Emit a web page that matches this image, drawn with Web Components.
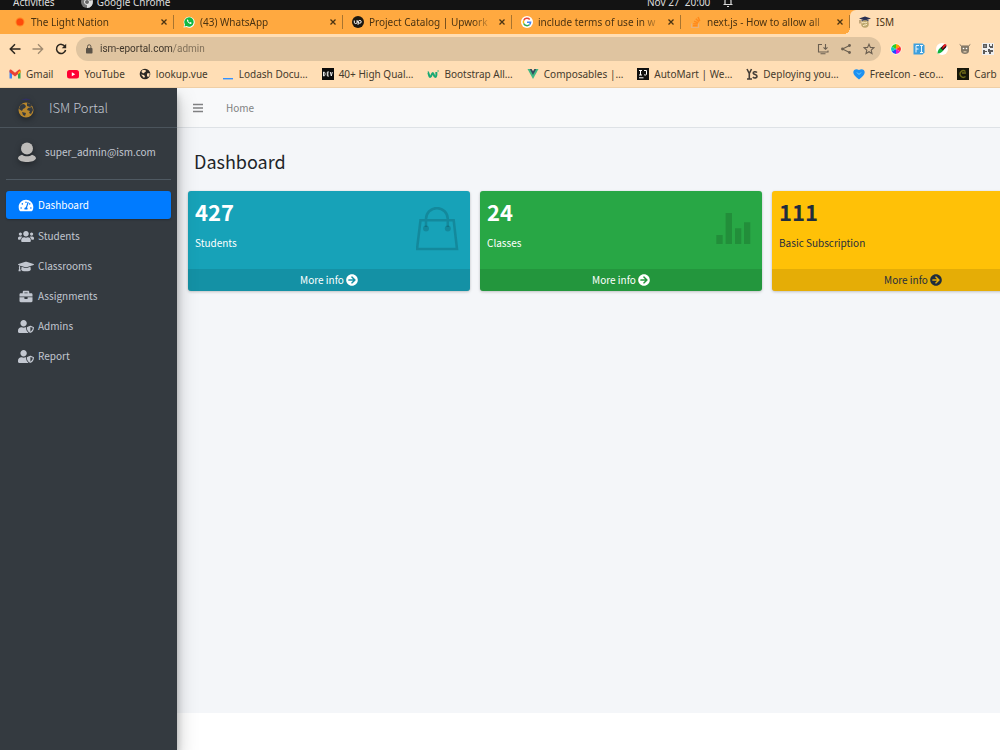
<!DOCTYPE html>
<html lang="en">
<head>
<meta charset="utf-8">
<title>ISM</title>
<style>
    body {
        margin: 0;
        min-height: 100vh;
        display: flex;
        flex-direction: column;
        overflow: hidden;
        font: 10px/16px "Noto Sans", sans-serif;
        color: #453a2c;
    }
</style>
</head>
<body>

<system-bar time="Nov 27&nbsp; 20:00">Google Chrome</system-bar>

<tab-strip>
    <browser-tab icon="lightNation">The Light Nation</browser-tab>
    <browser-tab icon="whatsapp">(43) WhatsApp</browser-tab>
    <browser-tab icon="upwork">Project Catalog | Upwork</browser-tab>
    <browser-tab icon="google">include terms of use in w</browser-tab>
    <browser-tab icon="stack">next.js - How to allow all</browser-tab>
    <browser-tab icon="ism" active>ISM</browser-tab>
</tab-strip>

<address-bar url="ism-eportal.com/admin"></address-bar>

<bookmarks-bar>
    <bookmark-link icon="gmail">Gmail</bookmark-link>
    <bookmark-link icon="youtube">YouTube</bookmark-link>
    <bookmark-link icon="globe">lookup.vue</bookmark-link>
    <bookmark-link icon="lodash">Lodash Docu…</bookmark-link>
    <bookmark-link icon="dev">40+ High Qual…</bookmark-link>
    <bookmark-link icon="wrap">Bootstrap All…</bookmark-link>
    <bookmark-link icon="vue">Composables |…</bookmark-link>
    <bookmark-link icon="intellij">AutoMart | We…</bookmark-link>
    <bookmark-link icon="ys">Deploying you…</bookmark-link>
    <bookmark-link icon="freeicon">FreeIcon - eco…</bookmark-link>
    <bookmark-link icon="carbon">Carb</bookmark-link>
</bookmarks-bar>

<admin-shell>
    <side-bar slot="sidebar" brand="ISM Portal" user="super_admin@ism.com">
        <side-link icon="gauge" active>Dashboard</side-link>
        <side-link icon="users">Students</side-link>
        <side-link icon="cap">Classrooms</side-link>
        <side-link icon="briefcase">Assignments</side-link>
        <side-link icon="shield">Admins</side-link>
        <side-link icon="shield">Report</side-link>
    </side-bar>
    <top-nav slot="nav">Home</top-nav>
    <span slot="title">Dashboard</span>
    <info-card theme="info" value="427" icon="bag">Students</info-card>
    <info-card theme="success" value="24" icon="stats">Classes</info-card>
    <info-card theme="warning" value="111" icon="person">Basic Subscription</info-card>
</admin-shell>

<script>
// [viewBox, markup]; everything without its own colour takes currentColor
const icons = {
    chrome: ['0 0 12 12', '<circle cx="6" cy="6" r="6" fill="#777"/><path d="M6 6 1 2.700A6 6 0 0 1 11.500 4H6z" fill="#bbb"/><path d="M6 6 6 12A6 6 0 0 0 11.500 4z" fill="#ddd"/><circle cx="6" cy="6" r="2.500" fill="#666" stroke="#eee"/>'],
    bell: ['0 0 12 12', '<path d="M1.500 8.500h9M3 8.500V5a3 3 0 0 1 6 0V8.500M5 10.500h2" fill="none" stroke="currentColor" stroke-width="1.200"/>'],
    close: ['0 0 8 8', '<path d="m1.500 1.500 5 5m0-5-5 5" stroke="currentColor" stroke-width="1.300"/>'],
    lightNation: ['0 0 12 12', '<circle cx="6" cy="6" r="4.500" fill="#ff7a1a" opacity=".7"/><circle cx="6" cy="6" r="3.500" fill="#ff4a0a"/>'],
    whatsapp: ['0 0 12 12', '<path d="M.5 11.500 1.300 8.700A5.500 5.500 0 1 1 3.500 11z" fill="#fff"/><path d="M1.400 10.600 2 8.500a4.700 4.700 0 1 1 1.700 1.600z" fill="#12b842"/><path d="M4.300 3.300c-1.400 1.100 2 5.500 4 4.400l.4-.9-1.400-.7-.6.600C6 6.400 5.500 5.900 5.200 5.300l.4-.6z" fill="#fff"/>'],
    upwork: ['0 0 12 12', '<circle cx="6" cy="6" r="6" fill="#1b1710"/><path d="M2.300 4.500v1.700a1.400 1.400 0 0 0 2.800 0V4.500c.6 1.600 1.200 2.700 2.700 2.700a1.400 1.400 0 1 0-1.400-1.500L6 8.800" fill="none" stroke="#fff"/>'],
    google: ['0 0 12 12', '<circle cx="6" cy="6" r="6" fill="#fff"/><g fill="none" stroke-width="1.500"><path d="M8.700 3.500A3.600 3.600 0 0 0 2.700 4.500" stroke="#ea4335"/><path d="M2.700 4.500a3.600 3.600 0 0 0 0 3" stroke="#fbbc05"/><path d="M2.700 7.500a3.600 3.600 0 0 0 5.700 1.200" stroke="#34a853"/><path d="M8.400 8.700A3.600 3.600 0 0 0 9.600 6.200H6" stroke="#4285f4"/></g>'],
    stack: ['0 0 12 12', '<path d="M1.500 7.500v4h7v-4" fill="none" stroke="#e9b179" stroke-width="1.200"/><path d="M3 9.800h4.500M3.200 7.700l4.500.4M4 5.300l4.200 1.600M5.800 2.800l3.200 3M8 1l1.800 4" stroke="#ff8a1c" stroke-width="1.500"/>'],
    ism: ['0 0 12 12', '<path d="m0 2.500 6-2 6 2-6 2z" fill="#2a3052"/><path d="M2.500 3.800h7v1.700h-7z" fill="#49506d"/><circle cx="6" cy="8" r="3.800" fill="#bda66d"/><path d="M3 7c2-2 3 1 5-1M4 10c1-2 3 0 4-2" stroke="#fff0c8" fill="none"/><path d="M1 4v3.500" stroke="#877040"/>'],
    back: ['0 0 12 12', '<path d="M11.500 6H1.500M6 1.300 1.300 6 6 10.700" fill="none" stroke="currentColor" stroke-width="1.500"/>'],
    forward: ['0 0 12 12', '<path d="M.5 6h10M6 1.300 10.700 6 6 10.700" fill="none" stroke="currentColor" stroke-width="1.300"/>'],
    reload: ['0 0 12 12', '<path d="M10 3.500A4.600 4.600 0 1 0 10.600 7" fill="none" stroke="currentColor" stroke-width="1.500"/><path d="M11.200.8v4.400H6.800z" fill="currentColor"/>'],
    lock: ['0 0 12 12', '<rect x="3" y="5" width="6.500" height="5.500" rx=".7" fill="currentColor"/><path d="M4.500 5V3.500a1.700 1.700 0 0 1 3.400 0V5" fill="none" stroke="currentColor"/>'],
    install: ['0 0 12 12', '<path d="M5 1.500H1.500V9H11V7.500M3.500 10.800h5M8.500 1v5M6.500 4.300l2 2 2-2" fill="none" stroke="currentColor" stroke-width="1.100"/>'],
    share: ['0 0 12 12', '<path d="M9.500 2.500 2.500 6l7 3.500" fill="none" stroke="currentColor" stroke-width="1.100"/><g fill="currentColor"><circle cx="9.500" cy="2.500" r="1.400"/><circle cx="2.500" cy="6" r="1.400"/><circle cx="9.500" cy="9.500" r="1.400"/></g>'],
    star: ['0 0 12 12', '<path d="m6 1.200 1.400 3.200 3.500.3-2.700 2.400.8 3.400-3-1.800-3 1.800.8-3.400L1.100 4.700l3.500-.3z" fill="none" stroke="currentColor" stroke-width="1.100"/>'],
    wheel: ['0 0 12 12', '<circle cx="6" cy="6" r="5.500" fill="#fff"/><path d="M6 6V1a5 5 0 0 1 4.300 2.500z" fill="#ff9d00"/><path d="m6 6 4.300-2.500a5 5 0 0 1 0 5z" fill="#ff2b2b"/><path d="m6 6 4.300 2.500A5 5 0 0 1 6 11z" fill="#e51bd0"/><path d="M6 6v5a5 5 0 0 1-4.300-2.500z" fill="#2447ff"/><path d="M6 6 1.700 8.500a5 5 0 0 1 0-5z" fill="#10c9c3"/><path d="M6 6 1.700 3.500A5 5 0 0 1 6 1z" fill="#35cc20"/>'],
    fi: ['0 0 12 12', '<path d="M.5.5h9l2 2v7l-2 2h-9z" fill="#3d9fdd"/><path d="M3 9.500v-7h3M3 6h2.500M7 2.500h3M8.500 2.500v7M7 9.500h3" stroke="#fff" fill="none" stroke-width=".9"/>'],
    picker: ['0 0 12 12', '<circle cx="6" cy="6" r="6" fill="#fff"/><path d="M1.500 10.500c0-3.500 2-5 3.500-6l2.500 2.500c-1 1.500-2.500 3.500-6 3.500z" fill="#12b33c"/><path d="m4.500 5 3-3c1.500-1 4 0 2.500 2.500L7 7.500z" fill="#151515"/><path d="m7 2.500 2-1.500 1.800 1L6 6.500z" fill="#e81c20"/>'],
    robot: ['0 0 12 12', '<path d="M.7 1.500 2.500 3h7l1.800-1.500" fill="none" stroke="#756a5b"/><path d="M2 3h8v5c0 4-8 4-8 0z" fill="#857a69"/><circle cx="4.500" cy="5.500" r=".8" fill="#fff"/><circle cx="7.500" cy="5.500" r=".8" fill="#fff"/><path d="M4.500 8h3v1.500h-3z" fill="#d0bfa5"/>'],
    qr: ['0 0 12 12', '<path d="M0 0h12v12H0z" fill="#eee"/><path d="M1 1h4v4H1zM7 1h1v2h2V1h1v4H8V4H7zM1 7h2v1h2v1H3v2H1zM6 6h2v1h3v2H9v2H7V9H6z" fill="#5b5b5b"/><path d="M2.500 2.500h1v1h-1z" fill="#fff"/>'],
    gmail: ['0 0 12 12', '<path d="M.5 10.500v-8L3 4.500v6z" fill="#4285f4"/><path d="M9 10.500v-6l2.500-2v8z" fill="#34a853"/><path d="M.5 4.300V2.500c0-1 1-1.300 1.800-.7L6 4.700l3.700-2.900c.8-.6 1.800-.3 1.800.7v1.800L6 8.500z" fill="#ea4335"/><path d="m9 4.500 2.500-2v2L9 6.300z" fill="#fbbc04"/>'],
    youtube: ['0 0 12 12', '<rect y="2" width="12" height="8.500" rx="2.500" fill="#ff0033"/><path d="m4.800 4.300 3.400 2-3.400 2z" fill="#fff"/>'],
    globe: ['0 0 12 12', '<circle cx="6" cy="6" r="5.300" fill="#2d2924"/><path d="M3 2.500c1-.8 4-.5 4 .5S5.500 4 5 5 3 4.500 2.500 4zM2 6.500l3 .5 1 1.500L5 10zM8 5.500l2.500-.5v3L9 9l-1-1z" fill="#ffdeb5"/>'],
    lodash: ['0 0 12 12', '<path d="M1 10h10v1.400H1z" fill="#3492ff"/>'],
    dev: ['0 0 12 12', '<path d="M0 0h12v12H0z" fill="#0b0b0b"/><path d="M1.500 4v4h.6c1.300 0 1.300-4 0-4zM7 4H5.300v4H7M5.300 6h1.400M8.300 4l1 4 1-4" fill="none" stroke="#fff" stroke-width=".9"/>'],
    wrap: ['0 0 12 12', '<path d="M.8 4c1 0 1 5 2.400 5S4.600 5 5.800 5s.8 4 2.400 4C9.500 9 9.500 6 9.300 4" fill="none" stroke="#19a974" stroke-width="2"/><path d="m10 3 1.500-1v2z" fill="#19a974"/>'],
    vue: ['0 0 12 12', '<path d="M.5 1h11L6 11z" fill="#41b883"/><path d="M2.800 1h6.400L6 7z" fill="#35495e"/><path d="M4.700 1h2.600L6 3.200z" fill="#ffdeb5"/>'],
    intellij: ['0 0 12 12', '<path d="M0 0h12v12H0z" fill="#101010"/><path d="M2 2.500h3M3.500 2.500V7M2 7h3M7 2.500h2.500V6c0 1.300-1.600 1.300-2.500.6M2 9.800h4.500" fill="none" stroke="#fff"/>'],
    ys: ['0 0 12 12', '<path d="m1 1 2.300 4.500L5.500 1M3.300 5v5.500M11 4.500c-1.300-1.300-4-1-3.800.7.200 1.800 3.800 1 3.800 3s-2.700 2.200-4.200.9M1 11h5" fill="none" stroke="#443d36" stroke-width="1.600"/>'],
    freeicon: ['0 0 12 12', '<path d="M6 11.500C2.500 8.700.3 6.500.3 4.200.3 1.600 3.300.2 6 2c2.700-1.800 5.700-.4 5.700 2.200C11.700 6.500 9.500 8.700 6 11.500z" fill="#1c91f2"/><path d="m4 4.500 2 2 2-2" fill="none" stroke="#70d2ff"/>'],
    carbon: ['0 0 12 12', '<path d="M0 0h12v12H0z" fill="#17170a"/><path d="M8.500 3.500a3.300 3.300 0 1 0 0 5M5 5h4" fill="none" stroke="#716d19" stroke-width="1.300"/>'],
    globeCap: ['0 0 18 20', '<path d="m4 1.500 5-1 5 1-5 1z" fill="#302f60"/><circle cx="9" cy="12" r="7.500" fill="#b9872c"/><path d="M4 6.500 7 6l2 2-1 2-2 1-1 2-3-2 1-3zM10 5l4 1 1 2-2 1-3-1zM11 10l4-1 1 3-2 4-2-1 1-2-3-1zM5 14l4 1-1 3-2-1z" fill="#343a40"/>'],
    avatar: ['0 0 18 20', '<circle cx="9" cy="6.500" r="6" fill="#bdbbb9"/><path d="M0 16.500c0-2 1.500-3 4-3.800 3 2 7 2 10 0 2.500.8 4 1.800 4 3.800C17 19 13 20 9 20s-8-1-9-3.500z" fill="#bdbbb9"/>'],
    bars: ['0 0 12 12', '<path d="M1 2.500h10M1 6h10M1 9.500h10" stroke="currentColor" stroke-width="1.700"/>'],
    gauge: ['0 0 576 512', '<path fill="currentColor" d="M288 32C128.940 32 0 160.940 0 320c0 52.800 14.250 102.260 39.060 144.800 5.610 9.620 16.300 15.200 27.440 15.200h443c11.140 0 21.830-5.580 27.440-15.200C561.750 422.260 576 372.800 576 320c0-159.060-128.940-288-288-288zm0 64c14.710 0 26.580 10.130 30.320 23.650-1.110 2.260-2.640 4.230-3.450 6.670l-9.220 27.670c-5.130 3.490-10.970 6.010-17.640 6.010-17.670 0-32-14.330-32-32S270.330 96 288 96zM96 384c-17.670 0-32-14.330-32-32s14.330-32 32-32 32 14.330 32 32-14.330 32-32 32zm48-160c-17.670 0-32-14.330-32-32s14.330-32 32-32 32 14.330 32 32-14.330 32-32 32zm246.770-72.410l-61.330 184C343.130 347.330 352 364.540 352 384c0 11.720-3.380 22.550-8.880 32H232.880c-5.500-9.450-8.880-20.280-8.880-32 0-33.940 26.500-61.430 59.900-63.590l61.340-184.010c4.170-12.560 17.730-19.450 30.360-15.170 12.570 4.190 19.350 17.790 15.170 30.360zm14.660 57.200l15.520-46.550c3.470-1.290 7.130-2.230 11.050-2.230 17.670 0 32 14.330 32 32s-14.330 32-32 32c-11.380-.01-20.890-6.280-26.570-15.220zM480 384c-17.670 0-32-14.330-32-32s14.330-32 32-32 32 14.330 32 32-14.330 32-32 32z"/>'],
    users: ['0 0 640 512', '<path fill="currentColor" d="M96 224c35.300 0 64-28.700 64-64s-28.700-64-64-64-64 28.700-64 64 28.700 64 64 64zm448 0c35.300 0 64-28.700 64-64s-28.700-64-64-64-64 28.700-64 64 28.700 64 64 64zm32 32h-64c-17.600 0-33.500 7.100-45.100 18.600 40.300 22.100 68.900 62 75.100 109.400h66c17.700 0 32-14.300 32-32v-32c0-35.300-28.700-64-64-64zm-256 0c61.900 0 112-50.100 112-112S381.900 32 320 32 208 82.100 208 144s50.100 112 112 112zm76.800 32h-8.300c-20.800 10-43.900 16-68.500 16s-47.600-6-68.500-16h-8.300C179.600 288 128 339.600 128 403.200V432c0 26.500 21.500 48 48 48h288c26.500 0 48-21.500 48-48v-28.800c0-63.600-51.600-115.200-115.200-115.200zm-223.700-13.400C161.500 263.100 145.600 256 128 256H64c-35.300 0-64 28.700-64 64v32c0 17.700 14.300 32 32 32h65.900c6.300-47.400 34.900-87.300 75.200-109.400z"/>'],
    cap: ['0 0 640 512', '<path fill="currentColor" d="M622.340 153.200L343.400 67.500c-15.200-4.670-31.600-4.670-46.790 0L17.660 153.200c-23.540 7.230-23.540 38.360 0 45.590l48.630 14.940c-10.670 13.190-17.230 29.280-17.880 46.900C38.780 266.150 32 276.110 32 288c0 10.780 5.680 19.850 13.860 25.650L20.330 428.530C18.110 438.520 25.710 448 35.940 448h56.110c10.240 0 17.840-9.480 15.620-19.470L82.140 313.650C90.320 307.850 96 298.780 96 288c0-11.570-6.470-21.250-15.660-26.870.76-15.020 8.440-28.300 20.690-36.720L296.600 284.500c9.060 2.780 26.440 6.250 46.790 0l278.950-85.700c23.550-7.240 23.550-38.360 0-45.600zM352.790 315.090c-28.530 8.760-52.840 3.920-65.590 0l-145.020-44.550L128 384c0 35.350 85.960 64 192 64s192-28.650 192-64l-14.180-113.470-145.030 44.560z"/>'],
    briefcase: ['0 0 512 512', '<path fill="currentColor" d="M320 336c0 8.840-7.160 16-16 16h-96c-8.840 0-16-7.160-16-16v-48H0v144c0 25.600 22.400 48 48 48h416c25.600 0 48-22.400 48-48V288H320v48zm144-208h-80V80c0-25.600-22.400-48-48-48H176c-25.600 0-48 22.400-48 48v48H48c-25.600 0-48 22.400-48 48v80h512v-80c0-25.600-22.400-48-48-48zm-144 0H192V96h128v32z"/>'],
    shield: ['0 0 640 512', '<path fill="currentColor" d="M622.300 271.100l-115.200-45c-4.100-1.600-12.600-3.700-22.200 0l-115.200 45c-10.700 4.200-17.700 14-17.700 24.900 0 111.600 68.700 188.800 132.900 213.900 9.600 3.700 18 1.600 22.200 0C558.400 489.900 640 420.500 640 296c0-10.900-7-20.700-17.700-24.900zM496 462.400V273.300l95.500 37.300c-5.600 87.100-60.900 135.400-95.500 151.800zM224 256c70.700 0 128-57.300 128-128S294.700 0 224 0 96 57.300 96 128s57.300 128 128 128zm96 40c0-2.500.8-4.800 1.100-7.200-2.500-.1-4.900-.8-7.500-.8h-16.700c-22.200 10.200-46.900 16-72.900 16s-50.600-5.800-72.900-16h-16.700C60.200 288 0 348.200 0 422.400V464c0 26.500 21.500 48 48 48h352c6.800 0 13.300-1.500 19.200-4-54-42.900-99.200-116.700-99.200-212z"/>'],
    arrow: ['0 0 512 512', '<path fill="currentColor" d="M256 8c137 0 248 111 248 248S393 504 256 504 8 393 8 256 119 8 256 8zm-28.900 143.600l75.500 72.400H120c-13.300 0-24 10.700-24 24v16c0 13.300 10.700 24 24 24h182.600l-75.500 72.400c-9.700 9.300-9.900 24.800-.4 34.300l11 10.900c9.400 9.400 24.600 9.400 33.900 0L404.300 273c9.400-9.400 9.400-24.600 0-33.900L271.600 106.300c-9.400-9.400-24.600-9.400-33.900 0l-11 10.900c-9.500 9.600-9.300 25.100.4 34.400z"/>'],
    bag: ['0 0 44 44', '<path d="M4.500 13.300h33.200L41 42H1zM10 20v-8a10.900 10.900 0 0 1 21.800 0v8" fill="none" stroke="currentColor" stroke-width="2.600"/><circle cx="10" cy="21.500" r="3" fill="currentColor"/><circle cx="31.800" cy="21.500" r="3" fill="currentColor"/>'],
    stats: ['0 0 44 44', '<path fill="currentColor" d="M8.300 28h6.400v9H8.300zM17.600 6H24v31h-6.400zM27 21.300h6.300V37H27zM36 15.300h6.300V37H36z"/>'],
    person: ['0 0 44 44', '<path fill="currentColor" d="M22 6c5 0 8 4 7 9s-3 7-3 9 1 3 5 4c6 2 9 3 10 9H0c1-6 7-7 13-9 4-1 5-2 5-4s-2-4-3-9 2-9 7-9z"/>'],
};

const icon = (name, cls = '') =>
    `<svg class="icon ${cls}" viewBox="${icons[name][0]}" aria-hidden="true">${icons[name][1]}</svg>`;

const baseStyle = `
    * { box-sizing: border-box; }
    a { color: inherit; text-decoration: none; }
    button { font: inherit; color: inherit; background: none; border: 0; padding: 0; display: flex; }
    .icon { width: 12px; height: 12px; flex: none; display: block; }
`;

/**
 * Register an element whose shadow root is built from its attributes
 * @param {string} tag
 * @param {string} style
 * @param {(el: HTMLElement) => string} markup
 */
const define = (tag, style, markup) => {
    customElements.define(tag, class extends HTMLElement {
        constructor() {
            super();
            this.attachShadow({ mode: 'open' });
        }

        connectedCallback() {
            this.shadowRoot.innerHTML = `<style>${baseStyle}${style}</style>${markup(this)}`;
        }
    });
};

// ---- browser window ----

define('system-bar', `
    :host {
        display: flex;
        align-items: flex-end;
        height: 10px;
        overflow: hidden;
        background: #131313;
        color: #dcdcdc;
        line-height: 16px;
    }
    .left { flex: 0 0 64%; display: flex; gap: 26px; padding-left: 13px; }
    .app, .clock { display: flex; align-items: center; gap: 4px; white-space: nowrap; }
    .clock { gap: 12px; padding-left: 7px; }
`, el => `
    <div class="left">
        <span>Activities</span>
        <span class="app">${icon('chrome')}<slot></slot></span>
    </div>
    <div class="clock"><span>${el.getAttribute('time')}</span>${icon('bell')}</div>
`);

define('tab-strip', `
    :host {
        display: flex;
        height: 24px;
        padding-left: 5px;
        background: #ffa940;
    }
`, () => '<slot></slot>');

define('browser-tab', `
    :host {
        flex: 0 0 169px;
        display: flex;
        align-items: center;
        min-width: 0;
        padding: 0 6px 0 9px;
        gap: 5px;
        box-sizing: border-box;
        background: linear-gradient(#a8742f, #a8742f) right center / 1px 14px no-repeat;
        color: #4a3312;
    }
    :host([active]) {
        position: relative;
        flex: 1 0 169px;
        background: #ffdeb5;
        border-radius: 6px 0 0 0;
    }
    /* foot of the active tab curving into the strip */
    :host([active])::before {
        content: "";
        position: absolute;
        left: -6px;
        bottom: 0;
        width: 6px;
        height: 6px;
        background: radial-gradient(circle at 0 0, #ffa940 6px, #ffdeb5 6px);
    }
    .label {
        flex: 1;
        overflow: hidden;
        white-space: nowrap;
        mask-image: linear-gradient(90deg, #000 calc(100% - 20px), transparent);
    }
    .close { width: 8px; height: 8px; }
    :host([active]) .label { mask-image: none; }
    :host([active]) button { display: none; }
`, el => `
    ${icon(el.getAttribute('icon'))}
    <span class="label"><slot></slot></span>
    <button aria-label="Close tab">${icon('close', 'close')}</button>
`);

define('address-bar', `
    :host {
        display: flex;
        align-items: center;
        gap: 9px;
        padding: 3px 6px 0 9px;
        background: #ffdeb5;
    }
    .group { display: flex; gap: 11px; color: #2c261e; }
    .dim { opacity: .45; }
    .box {
        flex: 1;
        display: flex;
        align-items: center;
        gap: 5px;
        height: 24px;
        padding: 0 6px 0 7px;
        border-radius: 12px;
        background: #dfc4a0;
        color: #5b5348;
    }
    .box .group { color: #6b5f50; }
    input {
        flex: 1;
        min-width: 0;
        border: 0;
        padding: 0;
        outline: 0;
        font: 10px/16px Roboto, sans-serif;
        /* host part dark, path part lighter */
        background: linear-gradient(90deg, #3b3227 73px, #7c6c56 73px);
        background-clip: text;
        -webkit-text-fill-color: transparent;
    }
`, el => `
    <div class="group">
        <button aria-label="Back">${icon('back')}</button>
        <button aria-label="Forward" class="dim">${icon('forward')}</button>
        <button aria-label="Reload">${icon('reload')}</button>
    </div>
    <div class="box">
        ${icon('lock')}
        <input type="text" aria-label="Address" value="${el.getAttribute('url')}">
        <div class="group">
            <button aria-label="Install">${icon('install')}</button>
            <button aria-label="Share">${icon('share')}</button>
            <button aria-label="Bookmark">${icon('star')}</button>
        </div>
    </div>
    <div class="group">
        ${['wheel', 'fi', 'picker', 'robot', 'qr'].map(n => `<button aria-label="${n}">${icon(n)}</button>`).join('')}
    </div>
`);

define('bookmarks-bar', `
    :host {
        display: flex;
        align-items: center;
        gap: 14px;
        height: 27px;
        padding-left: 9px;
        box-sizing: border-box;
        overflow: hidden;
        background: #ffdeb5;
        border-bottom: 1px solid #efcfa6;
    }
`, () => '<slot></slot>');

define('bookmark-link', `
    :host { display: block; flex: none; }
    a { display: flex; align-items: center; gap: 5px; white-space: nowrap; }
`, el => `<a href="#">${icon(el.getAttribute('icon'))}<slot></slot></a>`);

// ---- admin page ----

define('admin-shell', `
    :host {
        flex: 1;
        display: flex;
        overflow: hidden;
        font-family: "Noto Sans CJK SC", sans-serif;
        background: #fff;
        color: #212529;
    }
    .page { flex: 1; min-width: 0; display: flex; flex-direction: column; }
    main { flex: 1; padding: 0 11px; background: #f4f6f9; }
    h1 { margin: 0; padding: 17px 6px 14px; font-size: 18px; line-height: 32px; font-weight: 400; }
    .cards { display: grid; grid-template-columns: repeat(3, minmax(282px, 1fr)); gap: 10px; }
    footer { height: 37px; background: #fff; }
`, () => `
    <slot name="sidebar"></slot>
    <div class="page">
        <slot name="nav"></slot>
        <main>
            <h1><slot name="title"></slot></h1>
            <div class="cards"><slot></slot></div>
        </main>
        <footer></footer>
    </div>
`);

define('side-bar', `
    :host {
        flex: 0 0 177px;
        position: relative;
        z-index: 1;
        box-sizing: border-box;
        background: #343a40;
        color: #c2c7d0;
        box-shadow: 0 10px 19px rgba(0, 0, 0, .25), 0 7px 7px rgba(0, 0, 0, .22);
    }
    .row { display: flex; align-items: center; }
    .round { width: 18px; height: 20px; filter: drop-shadow(0 2px 3px rgba(0, 0, 0, .4)); }
    .brand {
        height: 40px;
        gap: 14px;
        padding-left: 17px;
        border-bottom: 1px solid #4b545c;
        font-size: 13px;
        font-weight: 300;
    }
    .user {
        height: 52px;
        gap: 9px;
        margin: 0 6px;
        padding: 0 0 4px 12px;
        border-bottom: 1px solid #4f5962;
    }
    nav { display: flex; flex-direction: column; gap: 2px; padding: 11px 6px; }
`, el => `
    <a class="row brand" href="#">${icon('globeCap', 'round')}${el.getAttribute('brand')}</a>
    <div class="row user">${icon('avatar', 'round')}<a href="#">${el.getAttribute('user')}</a></div>
    <nav><slot></slot></nav>
`);

define('side-link', `
    :host { display: block; }
    :host([active]) { margin-bottom: 1px; }
    a { display: flex; align-items: center; gap: 4px; height: 28px; padding-left: 12px; border-radius: 3px; }
    .icon { width: 16px; height: 13px; }
    :host([active]) a { background: #007bff; color: #fff; box-shadow: 0 1px 2px rgba(0, 0, 0, .24); }
`, el => `<a href="#">${icon(el.getAttribute('icon'))}<slot></slot></a>`);

define('top-nav', `
    :host {
        display: flex;
        align-items: center;
        gap: 22px;
        height: 40px;
        padding-left: 15px;
        box-sizing: border-box;
        background: #f8f9fa;
        border-bottom: 1px solid #dee2e6;
        color: #808182;
    }
`, () => `
    <button aria-label="Toggle menu">${icon('bars')}</button>
    <a href="#"><slot></slot></a>
`);

define('info-card', `
    :host {
        display: block;
        overflow: hidden;
        border-radius: 3px;
        background: var(--card);
        color: #fff;
        box-shadow: 0 0 1px rgba(0, 0, 0, .13), 0 1px 3px rgba(0, 0, 0, .2);
    }
    :host([theme=info]) { --card: #17a2b8; }
    :host([theme=success]) { --card: #28a745; }
    :host([theme=warning]) { --card: #ffc107; color: #1f2d3d; }
    .inner { display: flex; justify-content: space-between; padding: 6px 10px 18px 7px; }
    h3 { margin: 0 0 10px; font-size: 22px; line-height: 28px; font-weight: 700; }
    p { margin: 0; }
    .art { width: 44px; height: 44px; margin-top: 10px; color: rgba(0, 0, 0, .15); }
    a {
        display: flex;
        justify-content: center;
        align-items: center;
        gap: 2px;
        height: 22px;
        background: rgba(0, 0, 0, .1);
    }
`, el => `
    <div class="inner">
        <div>
            <h3>${el.getAttribute('value')}</h3>
            <p><slot></slot></p>
        </div>
        ${icon(el.getAttribute('icon'), 'art')}
    </div>
    <a href="#">More info ${icon('arrow')}</a>
`);
</script>
</body>
</html>
